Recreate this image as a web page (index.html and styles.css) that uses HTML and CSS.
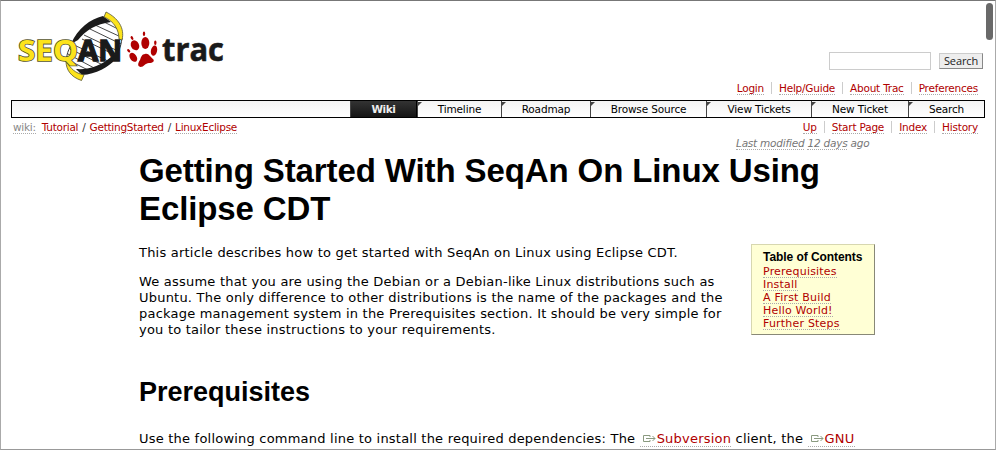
FILE: index.html
```html
<!DOCTYPE html>
<html lang="en">
<head>
<meta charset="utf-8">
<title>Getting Started With SeqAn On Linux Using Eclipse CDT</title>
<link rel="stylesheet" href="styles.css">
</head>
<body>
<div class="window">
<span class="scrollbar"></span>
<header class="banner">
  <svg class="logo" width="240" height="86" viewBox="0 0 240 86" role="img" aria-label="SeqAn trac">
    <path d="M84 35L118 51M82 39L113 54M90 29L121 44M95 25L121 37M102 21L120 30M72 44L110 62M70 49L103 65M68 54L96 69M68 60L88 70" stroke="#333" stroke-width=".9"/>
    <path d="M72 44C67 51 65 60 68 65M122 38C121 47 118 55 112 61" fill="none" stroke="#333"/>
    <path d="M71 44C78 28 90 19 103 16L111 22C96 24 86 30 78 40Z" fill="#1a1a1a"/>
    <path d="M76 69C90 70 102 65 111 57L118 57C108 68 96 74 82 75Z" fill="#1a1a1a"/>
    <path d="M106 12C118 18 125 28 122 40L119 39C119 30 114 21 104 17Z" fill="#fce31c" stroke="#555430" stroke-width=".8"/>
    <path d="M66 61C71 69 75 73 84 75L81.500 80.500C71 77 66 70 66 61Z" fill="#fce31c" stroke="#555430" stroke-width=".8"/>
    <text class="logo-seq" x="18" y="61" textLength="60" lengthAdjust="spacingAndGlyphs">SEQ</text>
    <text class="logo-an" x="78" y="61" textLength="44" lengthAdjust="spacingAndGlyphs">AN</text>
    <g fill="#b00000">
      <ellipse cx="135" cy="45.300" rx="4" ry="5.200" transform="rotate(-28 135 45.300)"/>
      <ellipse cx="145.300" cy="43" rx="4" ry="6"/>
      <ellipse cx="154" cy="50.700" rx="3.100" ry="5.200" transform="rotate(12 154 50.700)"/>
      <ellipse cx="133.300" cy="57.300" rx="3.300" ry="5" transform="rotate(-35 133.300 57.300)"/>
      <ellipse cx="132" cy="38" rx="1.200" ry="2" transform="rotate(-30 132 38)"/>
      <ellipse cx="144" cy="33.700" rx="1.200" ry="2.200"/>
      <ellipse cx="155.300" cy="42.700" rx="1.200" ry="2.200"/>
      <ellipse cx="128.700" cy="50.700" rx="1.200" ry="2" transform="rotate(-40 128.700 50.700)"/>
      <path d="M145 54C149 53 150 57 153 59C155 61 153 63 149 63C145 63 144 67 140.500 67C137 66 138 63 140 60C141 57 142 54 145 54Z"/>
    </g>
    <text class="logo-trac" x="162" y="61" textLength="62" lengthAdjust="spacingAndGlyphs">trac</text>
  </svg>
  <div class="tools">
    <form class="search"><input type="text" aria-label="Search"><button type="button">Search</button></form>
    <nav class="links meta"><a>Login</a><a>Help/Guide</a><a>About Trac</a><a>Preferences</a></nav>
  </div>
</header>
<nav class="mainnav">
  <a class="wiki active">Wiki</a><a class="timeline">Timeline</a><a class="roadmap">Roadmap</a><a class="browse">Browse Source</a><a class="view">View Tickets</a><a class="new">New Ticket</a><a class="find">Search</a>
</nav>
<div class="context">
  <div class="path"><a class="first">wiki:</a><a>Tutorial</a><i>/</i><a>GettingStarted</a><i>/</i><a>LinuxEclipse</a></div>
  <nav class="links ctx"><a>Up</a><a>Start Page</a><a>Index</a><a>History</a></nav>
</div>
<div class="modified"><a>Last modified</a> <a>12 days</a> ago</div>
<main>
  <h1>Getting Started With SeqAn On Linux Using<br>Eclipse CDT</h1>
  <div class="intro">
    <div class="prose">
      <p>This article describes how to get started with SeqAn on Linux using Eclipse CDT.</p>
      <p>We assume that you are using the Debian or a Debian-like Linux distributions such as<br>Ubuntu. The only difference to other distributions is the name of the packages and the<br>package management system in the Prerequisites section. It should be very simple for<br>you to tailor these instructions to your requirements.</p>
    </div>
    <aside class="toc">
      <h4>Table of Contents</h4>
      <ul><li><a>Prerequisites</a></li><li><a>Install</a></li><li><a>A First Build</a></li><li><a>Hello World!</a></li><li><a>Further Steps</a></li></ul>
    </aside>
  </div>
  <h2>Prerequisites</h2>
  <p class="deps">Use the following command line to install the required dependencies: The <a><svg class="ext" width="14" height="9" viewBox="0 0 14 9"><path d="M8 1.500H1.500V7.500H8V6M4 4.500H13M10.500 2L13 4.500L10.500 7M8 1.500V3"/></svg>Subversion</a> client, the <a><svg class="ext" width="14" height="9" viewBox="0 0 14 9"><path d="M8 1.500H1.500V7.500H8V6M4 4.500H13M10.500 2L13 4.500L10.500 7M8 1.500V3"/></svg>GNU</a></p>
</main>
</div>
</body>
</html>
```
FILE: styles.css
```css
* { box-sizing: border-box; }
body { margin: 0; background: #fff; color: #000; font: 13px/16px Verdana, "DejaVu Sans", sans-serif; overflow: hidden; }
.window { position: relative; height: 450px; overflow: hidden; border: 1px solid #aaa; border-top-color: #777; border-bottom-color: #999; }
.scrollbar { position: absolute; right: 2px; top: 2px; width: 7px; height: 37px; border-radius: 4px; background: #696969; }
a { color: #b00000; border-bottom: 1px dotted #aaa; }
.banner { display: flex; justify-content: space-between; height: 99px; padding-right: 12px; }
.logo { display: block; margin: -1px 0 0 -1px; }
.logo text { font-family: "Open Sans", sans-serif; font-weight: 700; }
.logo .logo-seq { font-size: 29px; fill: #fce31c; stroke: #55532a; stroke-width: 1.6px; paint-order: stroke; }
.logo .logo-an { font-size: 29px; fill: #1a1a1a; stroke: #1a1a1a; stroke-width: 1.4px; }
.logo .logo-trac { font-size: 33px; fill: #1a1a1a; stroke: #1a1a1a; stroke-width: .6px; }
.tools { padding-top: 51px; }
.search { display: flex; justify-content: flex-end; align-items: center; gap: 8px; height: 18px; margin: 0; }
.search input { width: 102px; height: 18px; border: 1px solid #ccc; padding: 0; }
.search button { width: 44px; height: 16px; padding: 0; border: 1px solid; border-color: #ccc #888 #888 #ccc; background: #eee; color: #222; font: 11px/12px "Open Sans", sans-serif; letter-spacing: -.1px; }
.links { display: flex; justify-content: flex-end; font-size: 10.5px; line-height: 12px; white-space: nowrap; }
.links a { position: relative; margin-left: 15px; height: 13px; }
.links a + a::before { content: ""; position: absolute; left: -8px; top: 0; height: 12px; border-left: 1px solid #ccc; }
.meta { margin: 12px 5px 0 0; letter-spacing: -.22px; }
.mainnav { display: flex; justify-content: flex-end; width: 974px; height: 18px; margin-left: 10px; border: 1px solid #000; background: linear-gradient(#f3f3f3, #fff); }
.mainnav a { position: relative; border: 0; border-left: 1px solid #444; color: #000; font-size: 10.5px; line-height: 17px; text-align: center; letter-spacing: -.15px; }
.mainnav a:not(.active)::before { content: ""; position: absolute; left: 0; top: 1px; border-top: 4px solid #444; border-right: 4px solid transparent; }
.mainnav .active { color: #eee; background: linear-gradient(#333, #151515); font-weight: 700; border-right: 1px solid #000; letter-spacing: -.4px; }
.wiki { width: 67px; } .timeline { width: 84px; } .roadmap { width: 89px; } .browse { width: 116px; } .view { width: 105px; } .new { width: 97px; } .find { width: 76px; }
.context { display: flex; justify-content: space-between; height: 18px; padding: 3px 17px 0 12px; }
.path { display: flex; font-size: 10.5px; line-height: 12px; color: #333; letter-spacing: -.26px; }
.path a { height: 13px; }
.path .first { color: #888; margin-right: 6px; }
.path i { font-style: normal; padding: 0 4px; }
.ctx { letter-spacing: -.2px; }
.modified { margin-left: 735px; height: 14px; font-size: 10.5px; line-height: 14px; font-style: italic; color: #777; white-space: nowrap; letter-spacing: -.22px; }
.modified a { color: #777; }
main { margin: 2px 120px 0 138px; }
h1, h2, h4 { font-family: "Liberation Sans", Arial, sans-serif; font-weight: 700; margin: 0; white-space: nowrap; }
h1 { font-size: 33px; line-height: 38px; letter-spacing: -.11px; }
.intro { display: flex; justify-content: space-between; padding-top: 16px; height: 148px; }
.prose { padding-top: 1px; }
p { margin: 0 0 13px; white-space: nowrap; }
.prose p, .deps { font-size: 13px; letter-spacing: .215px; }
.toc { width: 124px; height: 91px; padding: 5px 11px; border: 1px solid; border-color: #d7d7b0 #887 #887 #d7d7b0; background: #ffffd5; }
.toc h4 { font-size: 12px; line-height: 15px; letter-spacing: -.06px; }
.toc ul { list-style: none; margin: 0; padding: 0; font-size: 11px; line-height: 13px; letter-spacing: .2px; white-space: nowrap; }
.toc li { height: 13px; }
.toc a { display: inline-block; height: 13px; }
h2 { font-size: 27px; line-height: 32px; }
.deps { margin-top: 23px; }
.deps a { display: inline-block; height: 16px; padding-left: 2px; }
.ext { margin-right: 1px; fill: none; stroke: #8a9a80; }
```
